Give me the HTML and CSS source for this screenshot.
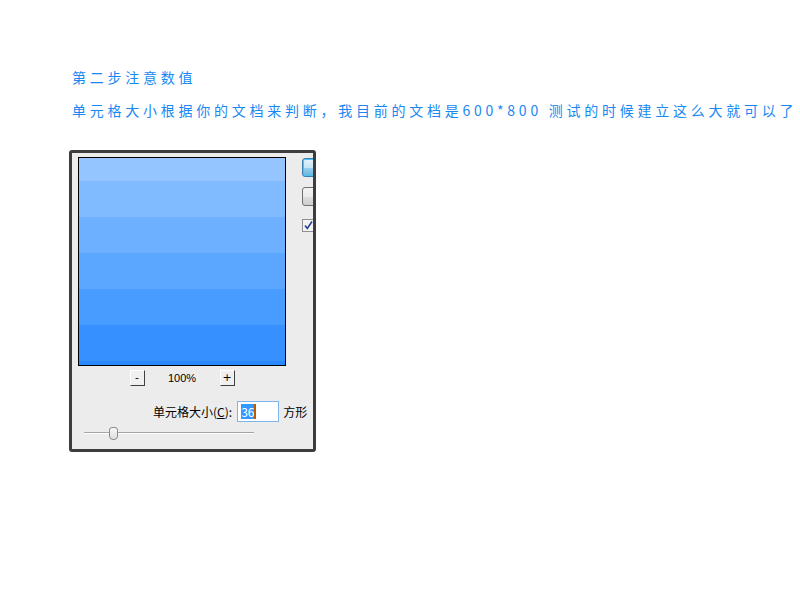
FILE: index.html
```html
<!DOCTYPE html>
<html lang="zh-CN">
<head>
<meta charset="utf-8">
<title>第二步注意数值</title>
<link rel="stylesheet" href="styles.css">
</head>
<body>
<div class="page">
  <p class="title">第二步注意数值</p>
  <p class="desc">单元格大小根据你的文档来判断，我目前的文档是600*800 测试的时候建立这么大就可以了</p>
  <div class="dialog">
    <div class="left">
      <div class="preview">
        <div class="band b1"></div>
        <div class="band b2"></div>
        <div class="band b3"></div>
        <div class="band b4"></div>
        <div class="band b5"></div>
        <div class="band b6"></div>
        <div class="band b7"></div>
      </div>
      <div class="zoom-row">
        <span class="sbtn">-</span>
        <span class="pct">100%</span>
        <span class="sbtn">+</span>
      </div>
      <div class="size-row">
        <span class="label">单元格大小(<u>C</u>):</span>
        <span class="input"><span class="sel">36</span><span class="caret"></span></span>
        <span class="unit">方形</span>
      </div>
      <div class="slider">
        <div class="track"></div>
        <div class="thumb"></div>
      </div>
    </div>
    <div class="right">
      <div class="btn primary"></div>
      <div class="btn"></div>
      <div class="check">
        <svg width="11" height="11" viewBox="0 0 11 11"><path d="M2 5.5 L4.3 8.5 L9 1.5" fill="none" stroke="#2a3f9a" stroke-width="1.6"/></svg>
      </div>
    </div>
  </div>
</div>
</body>
</html>
```

FILE: styles.css
```css
html, body {
  margin: 0;
  padding: 0;
  background: #ffffff;
}

.page {
  padding-top: 67px;
}

.title, .desc {
  margin: 0 0 0 72px;
  font-family: "Noto Sans CJK SC", "Noto Sans", sans-serif;
  font-size: 14px;
  font-weight: 400;
  line-height: 20px;
  letter-spacing: 3.75px;
  color: #1888f2;
  white-space: nowrap;
}

.desc {
  margin-top: 13px;
}

.dialog {
  margin: 30px 0 0 69px;
  width: 241px;
  height: 296px;
  border: 3px solid #3d3d3d;
  border-radius: 3px;
  background: #ececec;
  display: flex;
  overflow: hidden;
  font-family: "Noto Sans CJK SC", "Noto Sans", sans-serif;
}

.left {
  padding: 4px 0 0 6px;
  width: 208px;
  flex: none;
}

.preview {
  width: 206px;
  height: 207px;
  border: 1px solid #000;
  display: flex;
  flex-direction: column;
}

.band { flex: none; height: 36px; }
.b1 { height: 23px; background: #94c5ff; }
.b2 { background: #81bbff; }
.b3 { background: #6cb0ff; }
.b4 { background: #5ba7ff; }
.b5 { background: #489bff; }
.b6 { background: #3690ff; }
.b7 { height: 4px; background: #2a88ff; }

.zoom-row {
  margin-top: 4px;
  width: 208px;
  height: 15px;
  display: flex;
  justify-content: center;
  align-items: center;
  gap: 23px;
}

.sbtn {
  width: 13px;
  height: 14px;
  background: #f0f0f0;
  border-top: 1px solid #ffffff;
  border-left: 1px solid #ffffff;
  border-right: 1px solid #404040;
  border-bottom: 1px solid #404040;
  font-family: "DejaVu Sans", sans-serif;
  font-size: 11px;
  line-height: 13px;
  text-align: center;
  color: #000;
}

.pct {
  width: 29px;
  text-align: center;
  font-family: "Liberation Sans", sans-serif;
  font-size: 11px;
  color: #000;
}

.size-row {
  margin-top: 16px;
  padding-left: 75px;
  height: 21px;
  display: flex;
  align-items: center;
  white-space: nowrap;
  font-size: 12px;
  color: #000;
  width: 240px;
}

.label u {
  text-decoration: underline;
}

.input {
  margin-left: 5px;
  width: 37px;
  height: 19px;
  border: 1px solid #7eb4ea;
  background: #fff;
  display: flex;
  align-items: center;
  padding-left: 3px;
  box-sizing: content-box;
  flex: none;
}

.sel {
  background: #3399ff;
  color: #fff;
  line-height: 15px;
  font-size: 12px;
}

.caret {
  width: 2px;
  height: 15px;
  background: #c05a00;
}

.unit {
  margin-left: 4px;
}

.slider {
  position: relative;
  margin: 5px 0 0 6px;
  width: 170px;
  height: 13px;
}

.track {
  position: absolute;
  left: 0;
  right: 0;
  top: 5px;
  height: 1px;
  background: #a5a5a5;
  border-bottom: 1px solid #ffffff;
}

.thumb {
  position: absolute;
  left: 25px;
  top: 0;
  width: 7px;
  height: 11px;
  background: linear-gradient(#f6f6f6, #e0e0e0);
  border: 1px solid #8a8a8a;
  border-radius: 3px 3px 4px 4px;
}

.right {
  margin-left: 16px;
  padding-top: 5px;
  width: 11px;
  flex: none;
  overflow: hidden;
}

.btn {
  width: 22px;
  height: 17px;
  border: 1px solid #707070;
  border-radius: 3px;
  background: linear-gradient(#f2f2f2 0%, #ebebeb 50%, #dddddd 51%, #cfcfcf 100%);
  margin-bottom: 10px;
}

.btn.primary {
  height: 17px;
  border-color: #3c7fb1;
  background: linear-gradient(#e5f4fc 0%, #c4e5f6 50%, #98d1ef 51%, #68b3db 100%);
  box-shadow: inset 0 0 0 1px #49c4f5;
}

.check {
  margin-top: 13px;
  width: 11px;
  height: 11px;
  border: 1px solid #8f8f8f;
  background: #f4f4f4;
}

.check svg {
  display: block;
}
```
